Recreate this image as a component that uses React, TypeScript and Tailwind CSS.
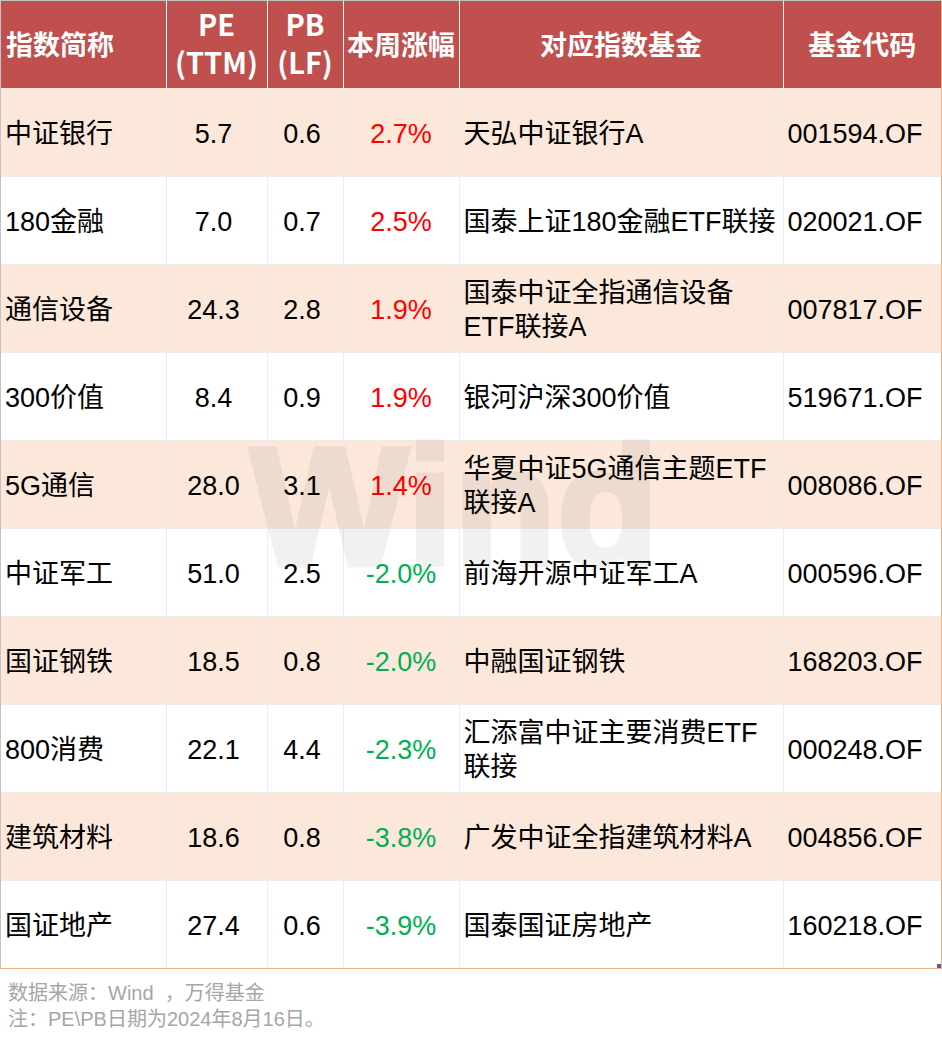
const rows = [
  ["中证银行", "5.7", "0.6", "2.7%", "天弘中证银行A", "001594.OF"],
  ["180金融", "7.0", "0.7", "2.5%", "国泰上证180金融ETF联接", "020021.OF"],
  ["通信设备", "24.3", "2.8", "1.9%", "国泰中证全指通信设备ETF联接A", "007817.OF"],
  ["300价值", "8.4", "0.9", "1.9%", "银河沪深300价值", "519671.OF"],
  ["5G通信", "28.0", "3.1", "1.4%", "华夏中证5G通信主题ETF联接A", "008086.OF"],
  ["中证军工", "51.0", "2.5", "-2.0%", "前海开源中证军工A", "000596.OF"],
  ["国证钢铁", "18.5", "0.8", "-2.0%", "中融国证钢铁", "168203.OF"],
  ["800消费", "22.1", "4.4", "-2.3%", "汇添富中证主要消费ETF联接", "000248.OF"],
  ["建筑材料", "18.6", "0.8", "-3.8%", "广发中证全指建筑材料A", "004856.OF"],
  ["国证地产", "27.4", "0.6", "-3.9%", "国泰国证房地产", "160218.OF"],
];

const bodyFont = "font-['Liberation_Sans','Noto_Sans_CJK_SC',sans-serif]";
const headFont = "font-['Noto_Sans_CJK_SC',sans-serif]";
const th = "border-r border-white text-center align-middle text-white font-bold p-0 leading-[38px] " + headFont;
const td = "border-r border-[#ececec] align-middle p-0 pt-[4px]";

export default function App() {
  return (
    <div className={"w-[942px] h-[1041px] bg-white overflow-hidden " + bodyFont}>
      <div className="relative w-[942px] h-[969px] border-t border-l border-t-[#c4c4c4] border-l-[#c4c4c4] border-r border-r-[#f4b183] border-b border-b-[#f4b183]">
        <table className="table-fixed border-collapse w-[940px] text-[27px] leading-[34px] text-black">
          <colgroup>
            <col className="w-[165px]" />
            <col className="w-[101px]" />
            <col className="w-[76px]" />
            <col className="w-[116px]" />
            <col className="w-[324px]" />
            <col className="w-[158px]" />
          </colgroup>
          <thead>
            <tr className="h-[87px] bg-[#c0504d]">
              <th className={th + " pb-[2px] text-left pl-[5px]"}>指数简称</th>
              <th className={th + " pb-[5px] text-[29px]"}>PE<br />(TTM)</th>
              <th className={th + " pb-[5px] text-[29px]"}>PB<br />(LF)</th>
              <th className={th + " pb-[2px]"}>本周涨幅</th>
              <th className={th + " pb-[2px]"}>对应指数基金</th>
              <th className={"text-center align-middle text-white font-bold p-0 pb-[2px] leading-[38px] " + headFont}>基金代码</th>
            </tr>
          </thead>
          <tbody>
            {rows.map((r, i) => (
              <tr key={r[0]} className={"h-[88px] border-b border-[#ececec] last:border-b-0 " + (i % 2 === 0 ? "bg-[#fce8db]" : "bg-white")}>
                <td className={td + " pl-[4px]"}>{r[0]}</td>
                <td className={td + " text-center pr-[6px]"}>{r[1]}</td>
                <td className={td + " text-center pr-[6px]"}>{r[2]}</td>
                <td className={td + " text-center " + (r[3].startsWith("-") ? "text-[#00b050]" : "text-[#ff0000]")}>{r[3]}</td>
                <td className={td + " pl-[4px] pr-[4px]"}>{r[4]}</td>
                <td className="align-middle p-0 pt-[4px] pl-[4px]">{r[5]}</td>
              </tr>
            ))}
          </tbody>
        </table>
        <div className="absolute left-[249px] top-[431px] text-[168px] leading-[150px] font-bold text-black opacity-[0.05] [-webkit-text-stroke:5px_black] pointer-events-none font-['Liberation_Sans',sans-serif]">Wind</div>
        <div className="absolute right-0 bottom-0 w-[4px] h-[4px] bg-[#4f5fb5]" />
      </div>
      <div className="pl-[8px] pt-[11px] text-[20px] leading-[26px] text-[#a6a6a6]">
        <div>数据来源：Wind&nbsp; ，万得基金</div>
        <div>注：PE\PB日期为2024年8月16日。</div>
      </div>
    </div>
  );
}
